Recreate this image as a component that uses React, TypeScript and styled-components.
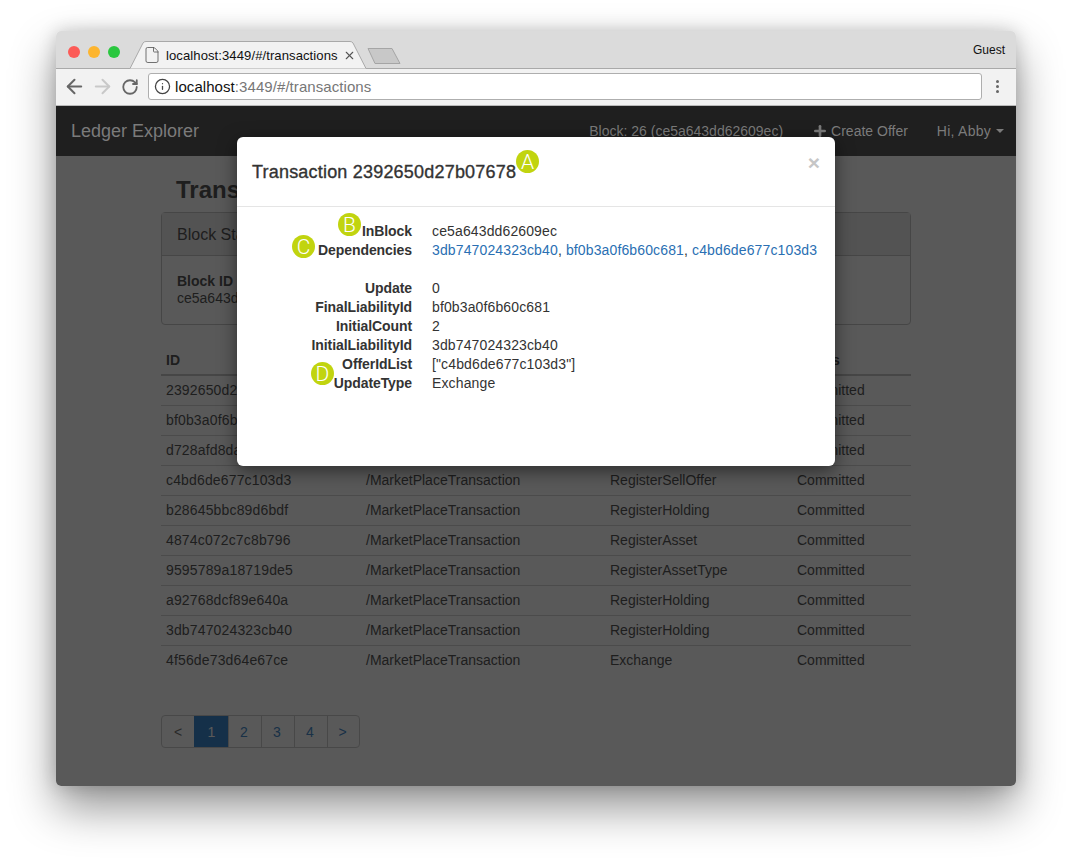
import styled, { createGlobalStyle } from "styled-components";
import { ArrowLeft, ArrowRight, File, Info, Plus, RotateCw, X } from "lucide-react";

const GlobalStyle = createGlobalStyle`
  html, body { margin: 0; padding: 0; background: #fff; }
  body { font-family: "Liberation Sans", Arial, sans-serif; font-size: 14px; color: #333; }
`;

const Stage = styled.div`
  height: 866px;
  box-sizing: border-box;
  padding: 31px 56px 0;
  overflow: hidden;
`;

const Window = styled.div`
  position: relative;
  width: 960px;
  height: 755px;
  display: flex;
  flex-direction: column;
  border-radius: 5px;
  box-shadow: 0 22px 45px rgba(0, 0, 0, 0.42), 0 0 18px rgba(0, 0, 0, 0.18);
`;

const TitleBar = styled.div`
  height: 38px;
  flex: none;
  box-sizing: border-box;
  display: flex;
  align-items: flex-end;
  padding-left: 12px;
  background: #dbdbdb;
  border-bottom: 1px solid #a9a9a9;
  border-radius: 5px 5px 0 0;
`;

const Lights = styled.div`
  display: flex;
  gap: 8px;
  margin-bottom: 10.5px;
`;

const Light = styled.span<{ $color: string }>`
  width: 12px;
  height: 12px;
  border-radius: 50%;
  background: ${(p) => p.$color};
`;

const Tab = styled.div`
  position: relative;
  width: 242px;
  height: 28px;
  margin: 0 0 -1px 8px;
  display: flex;
  align-items: center;
  padding-left: 15px;
  box-sizing: border-box;
  font-size: 13.1px;
  letter-spacing: 0.07px;
  color: #111;
`;

const TabShape = styled.svg`
  position: absolute;
  left: 0;
  top: 0;
`;

const TabContent = styled.div`
  position: relative;
  display: flex;
  align-items: center;
  gap: 5px;
`;

const TabClose = styled(X)`
  color: #555;
`;

const NewTab = styled.svg`
  margin: 0 0 3px -3px;
`;

const Guest = styled.div`
  margin-left: auto;
  align-self: center;
  margin-right: 11px;
  font-size: 12px;
  color: #111;
`;

const Toolbar = styled.div`
  height: 37px;
  flex: none;
  box-sizing: border-box;
  display: flex;
  align-items: center;
  padding: 0 0 1px 8px;
  background: #f2f2f2;
  border-bottom: 1px solid #b9b9b9;
  color: #666;
`;

const NavIcon = styled.span<{ $muted?: boolean }>`
  display: flex;
  width: 20px;
  margin-right: 8px;
  justify-content: center;
  color: ${(p) => (p.$muted ? "#c9c9c9" : "#666")};
  svg { flex: none; }
`;

const Omnibox = styled.div`
  width: 834px;
  height: 27px;
  box-sizing: border-box;
  display: flex;
  align-items: center;
  gap: 4.5px;
  padding-left: 4.5px;
  background: #fff;
  border: 1px solid #aeaeae;
  border-radius: 3px;
  font-size: 15px;
  letter-spacing: 0.07px;
  color: #777;
`;

const Host = styled.span`
  color: #111;
`;

const MenuDots = styled.div`
  display: flex;
  flex-direction: column;
  gap: 2px;
  margin-left: 14px;
`;

const Dot = styled.span`
  width: 3px;
  height: 3px;
  border-radius: 50%;
  background: #666;
`;

const Navbar = styled.div`
  height: 50px;
  flex: none;
  box-sizing: border-box;
  display: flex;
  align-items: center;
  padding: 0 12px 0 15px;
  background: #1f1f1f;
  color: #7b7b7b;
`;

const Brand = styled.div`
  font-size: 18px;
  margin-right: auto;
`;

const NavItem = styled.div`
  display: flex;
  align-items: center;
  margin-left: 29px;
`;

const UserName = styled.span`
  letter-spacing: 0.25px;
`;

const PlusIcon = styled(Plus)`
  margin-right: 3px;
`;

const Caret = styled.span`
  margin-left: 5px;
  border-top: 4px solid #7b7b7b;
  border-left: 4px solid transparent;
  border-right: 4px solid transparent;
`;

const PageBody = styled.div`
  position: relative;
  flex: 1;
  background: #fff;
  border-radius: 0 0 5px 5px;
  overflow: hidden;
`;

const Container = styled.div`
  width: 750px;
  margin: 0 auto;
  padding-top: 20px;
  color: #585858;
`;

const PageTitle = styled.h2`
  margin: 0 0 8px 15px;
  font-size: 24px;
  line-height: 28px;
  font-weight: bold;
`;

const Panel = styled.div`
  height: 113px;
  box-sizing: border-box;
  border: 1px solid #c8c8c8;
  border-radius: 4px;
`;

const PanelHeading = styled.div`
  height: 43px;
  box-sizing: border-box;
  padding: 12px 15px 10px;
  font-size: 16px;
  line-height: 20px;
  background: #eee;
  border-bottom: 1px solid #c8c8c8;
`;

const PanelBody = styled.div`
  padding: 17px 15px;
  line-height: 17px;
`;

const Table = styled.table`
  width: 750px;
  margin-top: 21px;
  border-collapse: collapse;
  table-layout: fixed;
`;

const HeadCell = styled.th`
  height: 29px;
  padding: 5px;
  box-sizing: border-box;
  text-align: left;
  border-bottom: 2px solid #c8c8c8;
`;

const Cell = styled.td<{ $last?: boolean; $hash?: boolean }>`
  height: 30px;
  padding: 5px;
  box-sizing: border-box;
  border-bottom: ${(p) => (p.$last ? "0" : "1px solid #d8d8d8")};
  white-space: nowrap;
  letter-spacing: ${(p) => (p.$hash ? "0.15px" : "0")};
`;

const Pagination = styled.div`
  display: inline-flex;
  height: 33px;
  margin-top: 40px;
  border: 1px solid #cfcfcf;
  border-radius: 4px;
  box-sizing: border-box;
`;

const PageLink = styled.div<{ $active?: boolean; $muted?: boolean }>`
  width: ${(p) => (p.$active ? "34px" : "33px")};
  display: flex;
  align-items: center;
  justify-content: center;
  box-sizing: border-box;
  padding-right: ${(p) => (p.$active || p.$muted ? "0" : "2px")};
  border-left: 1px solid ${(p) => (p.$active ? "#3d89d0" : "#cfcfcf")};
  &:first-child { border-left: 0; width: 32px; }
  &:last-child { width: 32px; }
  background: ${(p) => (p.$active ? "#3d89d0" : "transparent")};
  color: ${(p) => (p.$active ? "#fff" : p.$muted ? "#777" : "#4a8ccb")};
`;

const Backdrop = styled.div`
  position: absolute;
  inset: 0;
  background: rgba(0, 0, 0, 0.65);
`;

const Modal = styled.div`
  position: absolute;
  left: 181px;
  top: 106px;
  width: 598px;
  height: 329px;
  background: #fff;
  border-radius: 6px;
  box-shadow: 0 5px 18px rgba(0, 0, 0, 0.5);
  color: #333;
`;

const ModalHeader = styled.div`
  height: 70px;
  box-sizing: border-box;
  display: flex;
  align-items: center;
  justify-content: space-between;
  padding: 0 15px;
  border-bottom: 1px solid #e5e5e5;
`;

const ModalTitle = styled.h4`
  margin: 2px 0 0;
  font-size: 18px;
  font-weight: normal;
  letter-spacing: 0.2px;
  -webkit-text-stroke: 0.35px #333;
`;

const CloseButton = styled.span`
  margin: -19px 0 0;
  font-size: 21px;
  font-weight: bold;
  line-height: 1;
  color: #c6c6c6;
`;

const Details = styled.dl`
  display: grid;
  grid-template-columns: 160px 1fr;
  column-gap: 20px;
  margin: 0;
  padding: 15px 15px 0;
  line-height: 19px;
`;

const Term = styled.dt`
  font-weight: bold;
  text-align: right;
  letter-spacing: -0.08px;
`;

const Value = styled.dd`
  margin: 0;
  letter-spacing: 0.13px;
`;

const Spacer = styled.div`
  grid-column: 1 / -1;
  height: 19px;
`;

const Link = styled.span`
  color: #2a6fb3;
`;

const Callout = styled.span<{ $left: number; $top: number }>`
  position: absolute;
  left: ${(p) => p.$left}px;
  top: ${(p) => p.$top}px;
  width: 23px;
  height: 23px;
  display: flex;
  align-items: center;
  justify-content: center;
  border-radius: 50%;
  background: #c1d40f;
  color: #fff;
  font-family: Roboto, "Liberation Sans", sans-serif;
  font-weight: 300;
  font-size: 21px;
`;

const rows = [
  ["2392650d27b07678", "/MarketPlaceTransaction", "RegisterSellOffer", "Committed"],
  ["bf0b3a0f6b60c681", "/MarketPlaceTransaction", "RegisterHolding", "Committed"],
  ["d728afd8da51e2c4", "/MarketPlaceTransaction", "RegisterHolding", "Committed"],
  ["c4bd6de677c103d3", "/MarketPlaceTransaction", "RegisterSellOffer", "Committed"],
  ["b28645bbc89d6bdf", "/MarketPlaceTransaction", "RegisterHolding", "Committed"],
  ["4874c072c7c8b796", "/MarketPlaceTransaction", "RegisterAsset", "Committed"],
  ["9595789a18719de5", "/MarketPlaceTransaction", "RegisterAssetType", "Committed"],
  ["a92768dcf89e640a", "/MarketPlaceTransaction", "RegisterHolding", "Committed"],
  ["3db747024323cb40", "/MarketPlaceTransaction", "RegisterHolding", "Committed"],
  ["4f56de73d64e67ce", "/MarketPlaceTransaction", "Exchange", "Committed"],
];

const details = [
  ["FinalLiabilityId", "bf0b3a0f6b60c681"],
  ["InitialCount", "2"],
  ["InitialLiabilityId", "3db747024323cb40"],
  ["OfferIdList", '["c4bd6de677c103d3"]'],
  ["UpdateType", "Exchange"],
];

export default function App() {
  return (
    <Stage>
      <GlobalStyle />
      <Window>
        <TitleBar>
          <Lights>
            <Light $color="#fc5b57" />
            <Light $color="#fdb52f" />
            <Light $color="#2ac73f" />
          </Lights>
          <Tab>
            <TabShape width="242" height="28" viewBox="0 0 242 28">
              <path d="M0 27.5 H2 L15 2 Q16 0.5 18 0.5 H222 Q224 0.5 225 2 L238 27.5 H242 V28 H0 Z" fill="#f2f2f2" stroke="#a9a9a9" strokeWidth="1" />
            </TabShape>
            <TabContent>
              <File size={18} strokeWidth={1.1} color="#555" />
              <span>localhost:3449/#/transactions</span>
              <TabClose size={13} strokeWidth={2} />
            </TabContent>
          </Tab>
          <NewTab width="34" height="18" viewBox="0 0 34 18">
            <path d="M1 1.5 H25 L33 16.5 H8 Z" fill="#c8c8c8" stroke="#a5a5a5" strokeLinejoin="round" />
          </NewTab>
          <Guest>Guest</Guest>
        </TitleBar>
        <Toolbar>
          <NavIcon><ArrowLeft size={23} strokeWidth={2.1} /></NavIcon>
          <NavIcon $muted><ArrowRight size={23} strokeWidth={2.1} /></NavIcon>
          <NavIcon><RotateCw size={18} strokeWidth={2.4} /></NavIcon>
          <Omnibox>
            <Info size={17} strokeWidth={1.8} color="#444" />
            <span><Host>localhost</Host>:3449/#/transactions</span>
          </Omnibox>
          <MenuDots><Dot /><Dot /><Dot /></MenuDots>
        </Toolbar>
        <Navbar>
          <Brand>Ledger Explorer</Brand>
          <NavItem>Block: 26 (ce5a643dd62609ec)</NavItem>
          <NavItem><PlusIcon size={16} strokeWidth={4} />Create Offer</NavItem>
          <NavItem><UserName>Hi, Abby</UserName><Caret /></NavItem>
        </Navbar>
        <PageBody>
          <Container>
            <PageTitle>Transactions</PageTitle>
            <Panel>
              <PanelHeading>Block Stats</PanelHeading>
              <PanelBody>
                <strong>Block ID</strong>
                <div>ce5a643dd62609ec</div>
              </PanelBody>
            </Panel>
            <Table>
              <colgroup>
                <col width="200" />
                <col width="244" />
                <col width="187" />
                <col width="119" />
              </colgroup>
              <thead>
                <tr>
                  <HeadCell>ID</HeadCell>
                  <HeadCell>Chaincode</HeadCell>
                  <HeadCell>Method</HeadCell>
                  <HeadCell>Status</HeadCell>
                </tr>
              </thead>
              <tbody>
                {rows.map((row, i) => (
                  <tr key={row[0]}>
                    {row.map((value, col) => (
                      <Cell key={value} $last={i === rows.length - 1} $hash={col === 0}>{value}</Cell>
                    ))}
                  </tr>
                ))}
              </tbody>
            </Table>
            <Pagination>
              <PageLink $muted>&lt;</PageLink>
              <PageLink $active>1</PageLink>
              <PageLink>2</PageLink>
              <PageLink>3</PageLink>
              <PageLink>4</PageLink>
              <PageLink>&gt;</PageLink>
            </Pagination>
          </Container>
          <Backdrop />
        </PageBody>
        <Modal>
          <ModalHeader>
            <ModalTitle>Transaction 2392650d27b07678</ModalTitle>
            <CloseButton>×</CloseButton>
          </ModalHeader>
          <Details>
            <Term>InBlock</Term>
            <Value>ce5a643dd62609ec</Value>
            <Term>Dependencies</Term>
            <Value><Link>3db747024323cb40</Link>, <Link>bf0b3a0f6b60c681</Link>, <Link>c4bd6de677c103d3</Link></Value>
            <Spacer />
            <Term>Update</Term>
            <Value>0</Value>
            {details.map(([term, value]) => [
              <Term key={term}>{term}</Term>,
              <Value key={value}>{value}</Value>,
            ])}
          </Details>
          <Callout $left={279} $top={13}>A</Callout>
          <Callout $left={101} $top={76}>B</Callout>
          <Callout $left={55} $top={98}>C</Callout>
          <Callout $left={74} $top={225}>D</Callout>
        </Modal>
      </Window>
    </Stage>
  );
}
